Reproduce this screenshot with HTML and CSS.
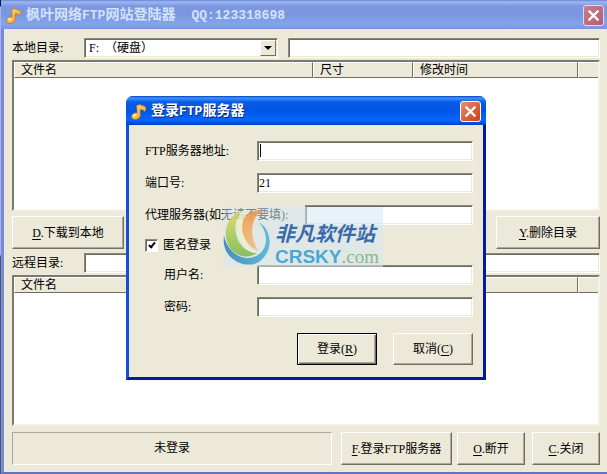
FILE: index.html
```html
<!DOCTYPE html>
<html lang="zh-CN">
<head>
  <meta charset="UTF-8" />
  <meta name="viewport" content="width=device-width, initial-scale=1" />
  <title>枫叶网络FTP网站登陆器</title>
  <link rel="stylesheet" href="styles.css">
</head>
<body>
  <svg class="defs" width="0" height="0">
    <defs>
      <linearGradient id="gold" x1="0" y1="0" x2="1" y2="1">
        <stop offset="0" stop-color="#ffe27a" />
        <stop offset="1" stop-color="#f09418" />
      </linearGradient>
      <symbol id="note" viewBox="0 0 16 16">
        <path d="M5.6 1.6 L8.6 0.6 C9.6 1.6 13.4 1.2 14.6 3.4 C15.6 5.2 14.6 7 13.4 7.6 C12.8 5.8 11 5.6 9.2 5.8 L9.4 11.2 C9.4 13.8 6.8 15.5 4 15.5 C1.6 15.5 0.4 14 0.6 12.2 C0.9 9.8 3.6 8.4 6.2 8.8 Z"
          fill="url(#gold)" stroke="#b8681c" stroke-width="0.6" />
        <ellipse cx="3.8" cy="11.4" rx="1.8" ry="1.1" fill="#fff0a8" />
      </symbol>
    </defs>
  </svg>

  <div class="window">
    <header class="titlebar">
      <svg class="title-icon"><use href="#note" /></svg>
      <h1>枫叶网络<span class="latin">FTP</span>网站登陆器</h1>
      <span class="latin qq">QQ:123318698</span>
      <button class="close" aria-label="关闭">
        <svg viewBox="0 0 12 12"><path d="M1.5 1.5 L10.5 10.5 M10.5 1.5 L1.5 10.5" /></svg>
      </button>
    </header>

    <main class="content">
      <div class="path-row">
        <label class="path-label" for="drive">本地目录:</label>
        <div class="combo">
          <select id="drive" class="field">
            <option>F:&nbsp;&nbsp;（硬盘）</option>
          </select>
          <span class="combo-arrow"></span>
        </div>
        <input class="field local-path" type="text" aria-label="本地路径">
      </div>

      <div class="file-list">
        <table>
          <thead>
            <tr><th>文件名</th><th class="col-size">尺寸</th><th class="col-date">修改时间</th><th class="col-end"></th></tr>
          </thead>
        </table>
      </div>

      <div class="actions">
        <button class="btn btn-download"><u>D</u>.下载到本地</button>
        <button class="btn btn-delete"><u>Y</u>.删除目录</button>
      </div>

      <div class="path-row">
        <label class="path-label" for="remote">远程目录:</label>
        <input id="remote" class="field" type="text">
      </div>

      <div class="file-list">
        <table>
          <thead>
            <tr><th>文件名</th><th class="col-size">尺寸</th><th class="col-date">修改时间</th><th class="col-end"></th></tr>
          </thead>
        </table>
      </div>

      <footer class="bottom-bar">
        <div class="status">未登录</div>
        <button class="btn btn-ftp"><u>F</u>.登录FTP服务器</button>
        <button class="btn btn-small btn-off"><u>O</u>.断开</button>
        <button class="btn btn-small"><u>C</u>.关闭</button>
      </footer>
    </main>
  </div>

  <!-- 登录对话框 -->
  <div class="dialog" role="dialog" aria-labelledby="dialog-title">
    <div class="titlebar titlebar-active">
      <svg class="title-icon"><use href="#note" /></svg>
      <h2 id="dialog-title">登录<span class="latin">FTP</span>服务器</h2>
      <button class="close" aria-label="关闭">
        <svg viewBox="0 0 12 12"><path d="M1.5 1.5 L10.5 10.5 M10.5 1.5 L1.5 10.5" /></svg>
      </button>
    </div>
    <form class="dialog-body">
      <div class="form-row">
        <label for="server">FTP服务器地址:</label>
        <div class="input-wrap">
          <input id="server" class="field" type="text">
          <span class="caret"></span>
        </div>
      </div>
      <div class="form-row">
        <label for="port">端口号:</label>
        <input id="port" class="field" type="text" value="21">
      </div>
      <div class="form-row">
        <label class="wide" for="proxy">代理服务器(如无请不要填):</label>
        <input id="proxy" class="field" type="text">
      </div>
      <div class="check-row">
        <input id="anon" type="checkbox" checked>
        <label for="anon">匿名登录</label>
      </div>
      <div class="form-row">
        <label class="indent" for="user">用户名:</label>
        <input id="user" class="field" type="text">
      </div>
      <div class="form-row">
        <label class="indent" for="pass">密码:</label>
        <input id="pass" class="field" type="password">
      </div>
      <div class="dialog-buttons">
        <button type="button" class="btn btn-default">登录(<u>R</u>)</button>
        <button type="button" class="btn">取消(<u>C</u>)</button>
      </div>
    </form>

    <!-- 水印 -->
    <div class="watermark">
      <svg class="swirl" viewBox="0 0 48 58">
        <defs>
          <linearGradient id="wm-green" x1="0" y1="0" x2="0" y2="1">
            <stop offset="0" stop-color="#e3d84a" />
            <stop offset="1" stop-color="#6fb544" />
          </linearGradient>
          <linearGradient id="wm-orange" x1="0" y1="0" x2="0" y2="1">
            <stop offset="0" stop-color="#f0903a" />
            <stop offset="1" stop-color="#f5b878" />
          </linearGradient>
          <linearGradient id="wm-blue" x1="0" y1="0" x2="1" y2="0">
            <stop offset="0" stop-color="#2079ae" />
            <stop offset="1" stop-color="#3fb0d8" />
          </linearGradient>
        </defs>
        <path d="M1 28 C-2 50 20 61 34 55 C50 46 51 24 36 14 C46 26 45 40 35 47 C22 55 5 46 1 28 Z" fill="url(#wm-blue)" />
        <path d="M18 3 C-2 10 -2 40 16 47 C23 50 30 48 34 45 C14 44 6 18 18 3 Z" fill="url(#wm-green)" />
        <path d="M18 3 C8 20 18 42 32 45 C20 34 16 16 24 2 Z" fill="#eef3c4" />
        <path d="M40 2 C12 0 14 34 35 43 C26 28 27 10 40 2 Z" fill="url(#wm-orange)" />
      </svg>
      <div class="brand">
        <div class="brand-cn">非凡软件站</div>
        <div class="brand-en">CRSKY<span>.com</span></div>
      </div>
    </div>
  </div>
</body>
</html>
```

FILE: styles.css
```css
*, *::before, *::after { box-sizing: border-box; }
body {
  margin: 0;
  padding-left: 1px;
  background: linear-gradient(#101c50 0, #101c50 6px, #a8b4e8 7px, #a8b4e8 255px, #4a5a60 256px);
  color: #000;
  font-family: 'Liberation Serif', 'Noto Sans CJK SC', serif;
  font-size: 12px;
  line-height: 16px;
}
button, input, select {
  font: inherit;
  color: inherit;
}
.defs {
  position: absolute;
}

/* Ventana principal */
.window {
  display: flex;
  flex-direction: column;
  min-height: 100vh;
  background: #ece9d8;
  border-left: 3px solid #7888dc;
  border-bottom: 2px solid #6474c4;
}
.titlebar {
  display: flex;
  align-items: center;
  height: 29px;
  padding: 2px 3px 0 0;
  margin-left: -3px;
  background: linear-gradient(#6c86d8 0, #9cb8f0 2px, #7c98e0 6px, #7b96e0 14px, #82a4ea 24px, #7a94dc 29px);
  color: #d4e2fa;
}
.titlebar h1, .titlebar h2 {
  margin: 0;
  font-size: 14px;
  line-height: 20px;
  font-weight: bold;
}
.latin {
  font-family: 'Liberation Mono', monospace;
  font-size: 13px;
  font-weight: bold;
}
.qq {
  margin-left: 16px;
}
.title-icon {
  width: 16px;
  height: 16px;
  margin: 0 4px 0 5px;
}
.close {
  display: flex;
  align-items: center;
  justify-content: center;
  width: 21px;
  height: 21px;
  margin-left: auto;
  padding: 0;
  background: linear-gradient(135deg, #c88090, #b05c74);
  border: 1px solid #d8dcf4;
  border-radius: 3px;
}
.close svg {
  width: 13px;
  height: 13px;
}
.close path {
  fill: none;
  stroke: #fff;
  stroke-width: 2;
}

.content {
  flex: 1;
  display: flex;
  flex-direction: column;
  padding: 9px 7px 7px 8px;
}
.path-row {
  display: flex;
  align-items: center;
  height: 20px;
}
.path-label {
  width: 72px;
  flex-shrink: 0;
}
.field {
  flex: 1;
  width: 100%;
  min-width: 0;
  height: 20px;
  padding: 0 1px;
  background: #fff;
  border: 1px solid;
  border-color: #8a8878 #fff #fff #8a8878;
  border-radius: 0;
  box-shadow: inset 1px 1px #6c6a5e, inset -1px -1px #ece9d8;
  outline: none;
}
.combo {
  position: relative;
  width: 194px;
  flex-shrink: 0;
}
.combo select {
  display: block;
  appearance: none;
  padding-left: 4px;
}
.combo-arrow {
  position: absolute;
  top: 2px;
  right: 2px;
  width: 16px;
  height: 16px;
  background: #ece9d8;
  border: 1px solid;
  border-color: #fff #716f64 #716f64 #fff;
  pointer-events: none;
}
.combo-arrow::after {
  content: '';
  position: absolute;
  top: 5px;
  left: 3px;
  border: 4px solid transparent;
  border-top-color: #000;
  border-bottom: 0;
}
.local-path {
  margin-left: 10px;
}

.file-list {
  flex: 1;
  min-height: 80px;
  margin-top: 2px;
  background: #fff;
  border: 2px solid;
  border-color: #7c7a6c #f4f2e8 #f4f2e8 #7c7a6c;
}
.file-list table {
  width: 100%;
  table-layout: fixed;
  border-collapse: separate;
  border-spacing: 0;
}
.file-list th {
  height: 16px;
  padding: 0 6px;
  background: #ece9d8;
  border: 1px solid;
  border-color: #fff #716f64 #716f64 #fff;
  font-weight: normal;
  line-height: 14px;
  text-align: left;
}
.file-list .col-size { width: 100px; }
.file-list .col-date { width: 165px; }
.file-list .col-end {
  width: 20px;
  border-right: 0;
}

.btn {
  height: 33px;
  min-width: 80px;
  padding: 0;
  background: #ece9d8;
  border: 1px solid;
  border-color: #fff #716f64 #716f64 #fff;
  border-radius: 0;
  box-shadow: inset -1px -1px #aca899;
  white-space: nowrap;
}
.btn u {
  text-underline-offset: 2px;
}
.actions {
  display: flex;
  justify-content: space-between;
  margin: 5px 0 4px;
}
.btn-download { width: 112px; }
.btn-delete { width: 104px; }

.bottom-bar {
  display: flex;
  margin-top: 6px;
}
.status {
  flex: 1;
  height: 33px;
  margin-right: 9px;
  border: 1px solid;
  border-color: #aca899 #fff #fff #aca899;
  line-height: 31px;
  text-align: center;
}
.btn-ftp {
  width: 111px;
  margin-right: 5px;
}
.btn-small {
  width: 68px;
  min-width: 0;
}
.btn-off {
  margin-right: 7px;
}

/* Diálogo de acceso */
.dialog {
  position: absolute;
  top: 96px;
  left: 126px;
  width: 360px;
  background: #ece9d8;
  border: 3px solid #0a3cc8;
  border-color: #0a3cc8 #001c9c #001c9c #1450dc;
  border-top: 0;
  border-radius: 7px 7px 0 0;
}
.titlebar-active {
  margin: 0 -3px;
  padding-right: 5px;
  border-radius: 7px 7px 0 0;
  background: linear-gradient(#0840b8 0, #3c94ff 2px, #0a5ce8 6px, #0054e4 14px, #0468fc 24px, #0040c4 29px);
  color: #fff;
  text-shadow: 1px 1px #0a2470;
}
.titlebar-active .close {
  background: linear-gradient(135deg, #ec8c70, #cc3c14);
  border-color: #fff;
}
.dialog-body {
  padding: 16px 10px 12px 16px;
}
.form-row {
  display: flex;
  align-items: center;
  height: 20px;
  margin-bottom: 12px;
}
.form-row label {
  width: 112px;
  flex-shrink: 0;
  white-space: nowrap;
}
.form-row .wide {
  width: 160px;
}
.form-row .indent {
  padding-left: 19px;
}
.input-wrap {
  position: relative;
  flex: 1;
}
.input-wrap .field {
  display: block;
}
.caret {
  position: absolute;
  top: 3px;
  left: 3px;
  width: 1px;
  height: 13px;
  background: #000;
}
.check-row {
  display: flex;
  align-items: center;
  height: 20px;
  margin: -2px 0 10px;
}
.check-row input {
  appearance: none;
  position: relative;
  width: 13px;
  height: 13px;
  margin: 0 5px 0 0;
  background: #fff;
  border: 1px solid;
  border-color: #8a8878 #fff #fff #8a8878;
  box-shadow: inset 1px 1px #6c6a5e;
}
.check-row input:checked::after {
  content: '';
  position: absolute;
  top: 1px;
  left: 4px;
  width: 4px;
  height: 7px;
  border: solid #000;
  border-width: 0 2px 2px 0;
  transform: rotate(40deg);
}
.dialog-buttons {
  display: flex;
  justify-content: flex-end;
  gap: 16px;
  padding-top: 4px;
}
.dialog-buttons .btn {
  height: 32px;
}
.btn-default {
  border-color: #000;
  box-shadow: inset 1px 1px #fff, inset -1px -1px #716f64, inset -2px -2px #aca899;
}

.watermark {
  position: absolute;
  top: 111px;
  left: 94px;
  display: flex;
  width: 160px;
  height: 60px;
  background: rgba(214, 231, 244, 0.55);
  pointer-events: none;
}
.swirl {
  width: 48px;
  height: 60px;
  flex-shrink: 0;
  opacity: 0.8;
}
.brand {
  padding: 12px 0 0 4px;
  white-space: nowrap;
}
.brand-cn {
  color: #3a6aaa;
  font-family: 'Noto Sans CJK SC', sans-serif;
  font-size: 20px;
  font-style: italic;
  font-weight: bold;
  line-height: 28px;
}
.brand-en {
  color: #4aa8d4;
  font-family: 'Liberation Sans', sans-serif;
  font-size: 19px;
  font-weight: bold;
  line-height: 20px;
}
.brand-en span {
  color: #8cba84;
  font-family: 'Liberation Serif', serif;
  font-weight: normal;
}
```
